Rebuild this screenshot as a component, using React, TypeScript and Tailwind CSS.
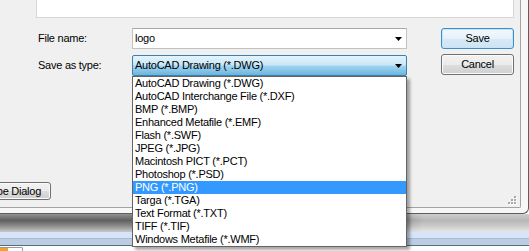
const items = [
  "AutoCAD Drawing (*.DWG)",
  "AutoCAD Interchange File (*.DXF)",
  "BMP (*.BMP)",
  "Enhanced Metafile (*.EMF)",
  "Flash (*.SWF)",
  "JPEG (*.JPG)",
  "Macintosh PICT (*.PCT)",
  "Photoshop (*.PSD)",
  "PNG (*.PNG)",
  "Targa (*.TGA)",
  "Text Format (*.TXT)",
  "TIFF (*.TIF)",
  "Windows Metafile (*.WMF)",
];

function Arrow() {
  return (
    <svg width="7" height="4" viewBox="0 0 7 4" className="block">
      <polygon points="0,0 7,0 3.5,4" fill="#000" />
    </svg>
  );
}

function Grip() {
  const dots = [
    [8, 0],
    [5, 3],
    [8, 3],
    [2, 6],
    [5, 6],
    [8, 6],
  ];
  return (
    <svg width="11" height="9" viewBox="0 0 11 9" className="block">
      {dots.map(([x, y], i) => (
        <g key={i}>
          <rect x={x + 1} y={y + 1} width="2" height="2" fill="#ffffff" />
          <rect x={x} y={y} width="2" height="2" fill="#a8a8a8" />
        </g>
      ))}
    </svg>
  );
}

export default function App() {
  return (
    <div className="relative w-[529px] h-[251px] overflow-hidden bg-white text-[11px] tracking-[-0.25px] text-black font-['Liberation_Sans',Arial,sans-serif] leading-none">
      {/* dialog window frame */}
      <div className="w-[529px] h-[214px] bg-[#f7f7f7] border-r border-b border-[#5e5e5e] rounded-br-[6px] pr-[7px] pb-[5px]">
        <div className="relative w-[521px] h-[208px] bg-[#f0f0f0] border-r border-b border-[#a3a3a3] rounded-br-[2px] flex flex-col">
          {/* file list bottom */}
          <div className="ml-[36px] w-[478px] h-[18px] bg-white border-x border-b border-[#d6d6d6]" />

          <div className="flex mt-[10px]">
            <div className="flex flex-col gap-[6px]">
              <div className="flex items-center h-[21px]">
                <span className="w-[132px] pl-[38px]">File name:</span>
                <div className="w-[275px] h-[21px] bg-white border border-[#c2c2c2] border-t-[#a9a9a9] flex items-center justify-between pl-[2px] pr-[4px]">
                  <span>logo</span>
                  <Arrow />
                </div>
              </div>
              <div className="flex items-center h-[21px]">
                <span className="w-[132px] pl-[38px]">Save as type:</span>
                <div className="w-[275px] h-[21px] rounded-[2px] border border-[#3c7fb1] bg-[linear-gradient(to_bottom,#e5f4fc_0%,#c9e8f8_45%,#9ed3f0_55%,#6cb4dc_100%)] flex items-center justify-between pl-[2px] pr-[4px]">
                  <span>AutoCAD Drawing (*.DWG)</span>
                  <Arrow />
                </div>
              </div>
            </div>

            <div className="ml-[34px] flex flex-col gap-[5px]">
              <div className="w-[73px] h-[21px] rounded-[3px] border border-[#3c8fcf] shadow-[inset_0_0_0_1px_#bfe6fa] bg-[linear-gradient(to_bottom,#f3f9fd_0%,#e6f2fa_50%,#d7e9f5_51%,#cfe3f1_100%)] flex items-center justify-center">
                Save
              </div>
              <div className="w-[73px] h-[21px] rounded-[3px] border border-[#707070] shadow-[inset_0_0_0_1px_#fbfbfb] bg-[linear-gradient(to_bottom,#f2f2f2_0%,#ebebeb_50%,#dddddd_51%,#cfcfcf_100%)] flex items-center justify-center">
                Cancel
              </div>
            </div>
          </div>

          {/* bottom-left button */}
          <div className="mt-auto mb-[7px] -ml-[20px] w-[71px] h-[18px] rounded-[3px] border border-[#707070] shadow-[inset_0_0_0_1px_#fbfbfb] bg-[linear-gradient(to_bottom,#f2f2f2_0%,#ebebeb_50%,#dddddd_51%,#cfcfcf_100%)] flex items-center justify-end pr-[9px] overflow-hidden whitespace-nowrap">
            Type Dialog
          </div>

          <div className="absolute right-[3px] bottom-[2px]">
            <Grip />
          </div>
        </div>
      </div>

      {/* shadow under the dialog */}
      <div className="relative h-[18px] bg-[linear-gradient(to_bottom,#929292_0%,#5f5f5f_35%,#8a8a8a_65%,#c8c8c8_100%)]">
        <div className="absolute inset-0 bg-[linear-gradient(to_right,rgba(255,255,255,0)_70%,rgba(255,255,255,0.55)_80%)]" />
      </div>

      {/* window below */}
      <div className="h-[6px] bg-[#d5e4f6]" />
      <div className="h-[1px] bg-[#a8bbd3]" />
      <div className="h-[6px] bg-[#bccde2]" />
      <div className="h-[1px] bg-[#5a6b82]" />
      <div className="flex pt-[1px]">
        <div className="w-[23px] h-[5px] border-t border-r border-[#9a9a9a] rounded-tr-[2px] flex">
          <div className="w-[8px] bg-[#f2a231]" />
        </div>
      </div>

      {/* open dropdown list */}
      <div className="absolute left-[132px] top-[76px] w-[275px] h-[171px] border border-[#646464] bg-white shadow-[3px_3px_3px_rgba(0,0,0,0.35)] flex flex-col">
        {items.map((it) => (
          <div
            key={it}
            className={
              it === "PNG (*.PNG)"
                ? "h-[13px] flex items-center pl-[2px] bg-[#3399ff] text-white"
                : "h-[13px] flex items-center pl-[2px]"
            }
          >
            {it}
          </div>
        ))}
      </div>
    </div>
  );
}
